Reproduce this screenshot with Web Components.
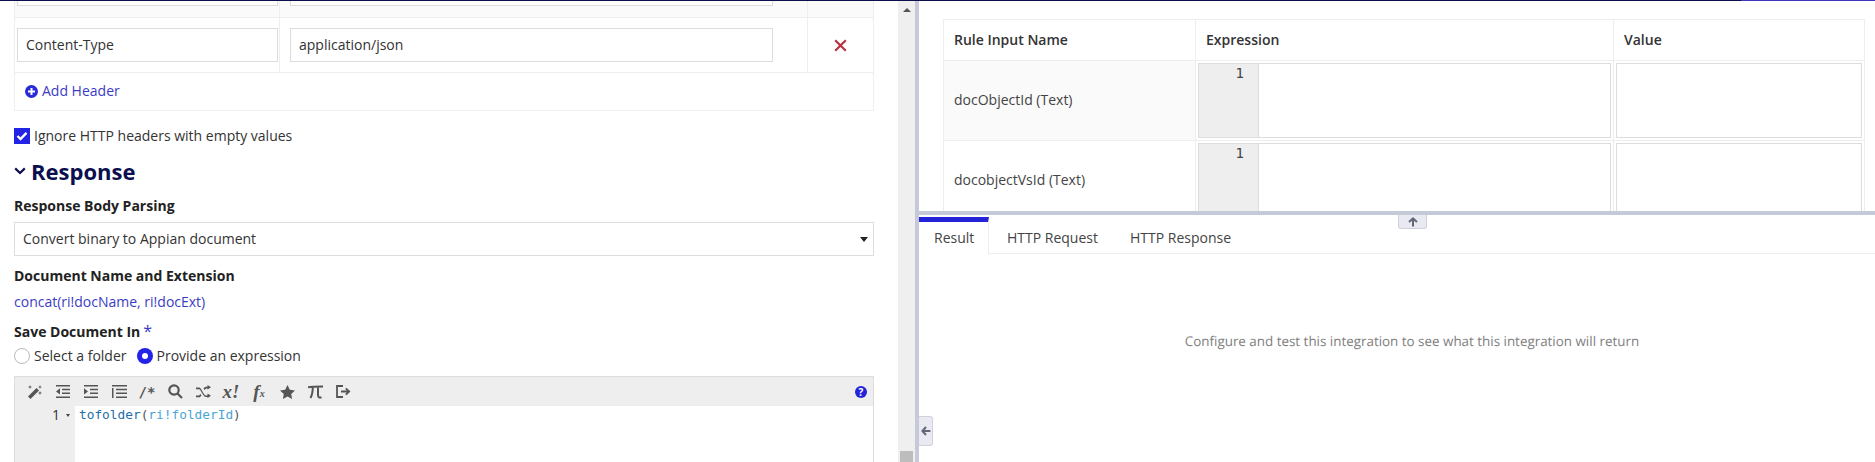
<!DOCTYPE html>
<html>
<head>
<meta charset="utf-8">
<title>Integration</title>
<style>
  html, body { margin: 0; height: 462px; overflow: hidden; background: #fff; }
  body { font: 14px/20px "Open Sans", sans-serif; color: #222; }
</style>
</head>
<body>
<app-shell>
  <settings-pane slot="left">
    <header-table></header-table>
    <check-line>Ignore HTTP headers with empty values</check-line>
    <section-title>Response</section-title>
    <field-label style="margin-top:8px">Response Body Parsing</field-label>
    <select-box>Convert binary to Appian document</select-box>
    <field-label style="margin-top:10px">Document Name and Extension</field-label>
    <link-text>concat(ri!docName, ri!docExt)</link-text>
    <field-label required style="margin-top:9px">Save Document In</field-label>
    <radio-group></radio-group>
    <code-editor></code-editor>
  </settings-pane>
  <test-pane slot="right">
    <rule-table slot="inputs"></rule-table>
    <result-tabs slot="results"></result-tabs>
  </test-pane>
</app-shell>

<script>
// small helper, every element just stamps its markup in an open shadow root
class ShadowEl extends HTMLElement {
  constructor() {
    super();
    this.attachShadow({ mode: 'open' });
    this.shadowRoot.innerHTML = this.markup();
  }
  markup() { return '<slot></slot>'; }
}

class AppShell extends ShadowEl {
  markup() {
    return `
      <style>
        :host { display: block; height: 462px; }
        .topline { display: flex; height: 1px; background: #0b0f4a; }
        .topline i { margin-left: auto; width: 134px; background: #4136c0; }
        .cols { display: flex; height: 461px; }
        .bar { width: 17px; background: #efefef; flex: none; display: flex; flex-direction: column;
               justify-content: space-between; align-items: center; }
        .up { margin-top: 7px; border: 4px solid transparent; border-top: 0; border-bottom: 4px solid #555; }
        .thumb { width: 13px; height: 11px; background: #bdbdbd; }
        .split { width: 4px; background: #c5c9d8; flex: none; }
        .right { flex: 1; min-width: 0; position: relative; }
        .left { width: 898px; flex: none; overflow: hidden; }
        .toggle { position: absolute; left: 0; top: 415px; width: 14px; height: 30px; box-sizing: border-box;
                  background: #e9eaf1; border: 1px solid #cfd2de; border-left: 0; border-radius: 0 3px 3px 0;
                  display: flex; align-items: center; justify-content: center; }
      </style>
      <div class="topline"><i></i></div>
      <div class="cols">
        <div class="left"><slot name="left"></slot></div>
        <div class="bar"><span class="up"></span><span class="thumb"></span></div>
        <div class="split"></div>
        <div class="right">
          <slot name="right"></slot>
          <div class="toggle">
            <svg width="10" height="10" viewBox="0 0 10 10"><path d="M5 1 1.4 5 5 9M1.8 5H9.4" fill="none" stroke="#636778" stroke-width="2"/></svg>
          </div>
        </div>
      </div>`;
  }
}

class SettingsPane extends ShadowEl {
  markup() {
    return `
      <style>:host { display: block; padding: 0 24px 0 14px; }</style>
      <slot></slot>`;
  }
}

class HeaderTable extends ShadowEl {
  markup() {
    return `
      <style>
        :host { display: block; border: 1px solid #eee; border-top: 0; box-sizing: border-box; }
        .row { display: grid; grid-template-columns: 265px 528px 1fr; border-bottom: 1px solid #eee; }
        .row > div { border-right: 1px solid #eee; box-sizing: border-box; }
        .row > div:last-child { border-right: 0; }
        .clip { height: 16px; background: #fafafa; }
        .clip > div { padding: 0 1px 0 2px; }
        .clip b { display: block; height: 4px; border: 1px solid #ddd; border-top: 0; background: #fff; }
        .clip > div + div { padding: 0 34px 0 10px; }
        .full { height: 54px; }
        .full > div { padding: 10px 1px 0 2px; }
        .full > div + div { padding-left: 10px; padding-right: 34px; }
        .input { height: 34px; box-sizing: border-box; border: 1px solid #ddd; padding: 6px 8px; line-height: 20px; color: #333; }
        .x { display: flex; align-items: center; justify-content: center; padding: 0 !important; }
        .add { height: 37px; box-sizing: border-box; padding: 0 0 1px 10px; display: flex; align-items: center; gap: 4px; color: #3c3cc4; }
      </style>
      <div class="row clip"><div><b></b></div><div><b></b></div><div></div></div>
      <div class="row full">
        <div><div class="input">Content-Type</div></div>
        <div><div class="input">application/json</div></div>
        <div class="x"><svg width="13" height="13" viewBox="0 0 13 13"><path d="M1.200 1.200 11.800 11.800M11.800 1.200 1.200 11.800" stroke="#b8323f" stroke-width="2.200"/></svg></div>
      </div>
      <div class="add">
        <svg width="13" height="13" viewBox="0 0 13 13"><circle cx="6.500" cy="6.500" r="6.500" fill="#2a2ad8"/><path d="M6.500 3v7M3 6.500h7" stroke="#fff" stroke-width="2"/></svg>
        <span>Add Header</span>
      </div>`;
  }
}

class CheckLine extends ShadowEl {
  markup() {
    return `
      <style>
        :host { display: flex; align-items: center; gap: 4px; margin-top: 15px; height: 20px; color: #333; }
        .box { width: 16px; height: 16px; background: #2323e6; display: flex; align-items: center; justify-content: center; }
      </style>
      <span class="box"><svg width="12" height="10" viewBox="0 0 12 10"><path d="M1.500 5 4.500 8 10.500 1.800" fill="none" stroke="#fff" stroke-width="2.400"/></svg></span>
      <slot></slot>`;
  }
}

class SectionTitle extends ShadowEl {
  markup() {
    return `
      <style>
        :host { display: flex; align-items: center; gap: 5px; margin-top: 8px; height: 34px;
                font-size: 22px; line-height: 34px; font-weight: 700; color: #0c0f4e; }
      </style>
      <svg width="12" height="8" viewBox="0 0 12 8"><path d="M1.200 1.400 6 6 10.800 1.400" fill="none" stroke="#0c0f4e" stroke-width="2.200"/></svg>
      <slot></slot>`;
  }
}

class FieldLabel extends ShadowEl {
  markup() {
    return `
      <style>
        :host { display: block; font-weight: 700; line-height: 20px; color: #222; }
        :host([required]) .star { display: inline; }
        .star { display: none; color: #3c3cc4; font-weight: 400; font-size: 16px; margin-left: 3px; }
      </style>
      <slot></slot><span class="star">*</span>`;
  }
}

class SelectBox extends ShadowEl {
  markup() {
    return `
      <style>
        :host { display: flex; align-items: center; justify-content: space-between; height: 34px; box-sizing: border-box;
                border: 1px solid #ddd; margin-top: 6px; padding: 0 5px 0 8px; color: #333; }
        .caret { border: 4px solid transparent; border-top: 5px solid #222; border-bottom: 0; }
      </style>
      <slot></slot><span class="caret"></span>`;
  }
}

class LinkText extends ShadowEl {
  markup() {
    return `
      <style>:host { display: block; margin-top: 6px; color: #3c3cc4; line-height: 20px; }</style>
      <slot></slot>`;
  }
}

class RadioGroup extends ShadowEl {
  markup() {
    return `
      <style>
        :host { display: flex; align-items: center; height: 20px; margin-top: 4px; color: #333; }
        span { display: inline-flex; align-items: center; gap: 4px; margin-right: 10px; }
        i { width: 14px; height: 14px; border: 1px solid #bbb; border-radius: 50%; display: block; }
        i.on { width: 16px; height: 16px; border: 0; background: #2323e6; position: relative; }
        i.on::after { content: ""; position: absolute; left: 5px; top: 5px; width: 6px; height: 6px; border-radius: 50%; background: #fff; }
      </style>
      <span><i></i>Select a folder</span>
      <span><i class="on"></i>Provide an expression</span>`;
  }
}

class CodeEditor extends ShadowEl {
  markup() {
    const g = '#555';
    return `
      <style>
        :host { display: block; margin-top: 10px; border: 1px solid #ddd; height: 90px; box-sizing: border-box; }
        .tools { height: 29px; background: #eee; display: flex; align-items: center; padding: 0 6px 0 6px; }
        .tools span { width: 28px; height: 20px; flex: none; display: flex; align-items: center; justify-content: center;
                      font: italic 700 16px/20px "Liberation Serif", serif; color: ${g}; }
        .tools span.t { font: 700 14px/20px "DejaVu Sans Mono", monospace; }
        .help { margin-left: auto; width: 12px !important; height: 12px !important; border-radius: 50%; background: #2323d8;
                color: #fff !important; font: 700 10px/12px "Open Sans", sans-serif !important; }
        .body { display: flex; height: 60px; }
        .gutter { width: 60px; flex: none; background: #eee; box-sizing: border-box; padding: 0 5px 0 0;
                  display: flex; justify-content: flex-end; gap: 6px; font: 14px/18px "Open Sans", sans-serif; color: #333; }
        .gutter em { width: 0; height: 0; margin-top: 8px; border: 2.500px solid transparent; border-top: 3px solid #444; border-bottom: 0; }
        pre { margin: 0; padding: 0 0 0 4px; font: 12.800px/18px "DejaVu Sans Mono", monospace; color: #555; }
        .fn { color: #1f6ea8; } .var { color: #4aa5d8; }
      </style>
      <div class="tools">
        <span><svg width="16" height="16" viewBox="0 0 16 16" fill="${g}"><path d="M1 12.500 9.500 4l2.500 2.500L3.500 15z"/><path d="M3 1l.6 1.400L5 3l-1.400.6L3 5l-.6-1.400L1 3l1.400-.6zM13 7l.6 1.400L15 9l-1.400.6L13 11l-.6-1.400L11 9l1.400-.6zM13 1l.5 1.500L15 3l-1.500.5L13 5l-.5-1.500L11 3l1.500-.5z"/></svg></span>
        <span><svg width="14" height="13" viewBox="0 0 14 13" fill="${g}"><path d="M0 0h14v1.500H0zM6 3.700h8v1.500H6zM6 7.600h8v1.500H6zM0 11.500h14V13H0zM4 3.200v6.400L0 6.400z"/></svg></span>
        <span><svg width="14" height="13" viewBox="0 0 14 13" fill="${g}"><path d="M0 0h14v1.500H0zM6 3.700h8v1.500H6zM6 7.600h8v1.500H6zM0 11.500h14V13H0zM0 3.200v6.400l4-3.200z"/></svg></span>
        <span><svg width="15" height="13" viewBox="0 0 15 13" fill="${g}"><path d="M0 0h15v1.500H0zM4 3.700h11v1.500H4zM4 7.600h11v1.500H4zM4 11.500h11V13H4zM0 3h1.500v10H0z"/></svg></span>
        <span class="t">/*</span>
        <span><svg width="15" height="15" viewBox="0 0 15 15" fill="none" stroke="${g}" stroke-width="2.200"><circle cx="6" cy="6" r="4.700"/><path d="M9.500 9.500 14 14"/></svg></span>
        <span><svg width="15" height="13" viewBox="0 0 15 13" fill="${g}"><path d="M0 2.500h3c2.500 0 4.500 8 7 8h1.500v-2L15 10.800 11.500 13v-1h-1.500C7 12 5 4.200 3 4.200H0zM0 10.500h3l1.500-1.600 1 1.500C4.700 11.400 3.900 12.200 3 12.200H0zM11.500 0 15 2.300 11.500 4.600V3.400H10L8.500 5l-1-1.500C8.200 2.500 9 1.700 10 1.700h1.500z"/></svg></span>
        <span style="font-size:19px">x!</span>
        <span style="font-size:19px">f<small style="font-size:10px;margin-top:4px">x</small></span>
        <span><svg width="15" height="14" viewBox="0 0 15 14" fill="${g}"><path d="M7.500 0 9.800 4.700l5.200.7-3.800 3.600.9 5-4.600-2.400L2.900 14l.9-5L0 5.400l5.200-.7z"/></svg></span>
        <span><svg width="15" height="14" viewBox="0 0 15 14" fill="none" stroke="${g}" stroke-width="2"><path d="M0 2.200C3 1.500 12 1.500 15 1.500M4.800 1.800C4.800 6 4.200 10 2.500 13M10 1.800V10c0 2.500 1.500 3 3.500 2.300"/></svg></span>
        <span><svg width="15" height="13" viewBox="0 0 15 13" fill="none" stroke="${g}" stroke-width="1.800"><path d="M7 1H1v11h6M5 6.500h7.500M9.800 3.300l3.400 3.200-3.400 3.200"/></svg></span>
        <span class="help">?</span>
      </div>
      <div class="body">
        <div class="gutter">1<em></em></div>
        <pre><span class="fn">tofolder</span>(<span class="var">ri!folderId</span>)</pre>
      </div>`;
  }
}

class TestPane extends ShadowEl {
  markup() {
    return `
      <style>
        :host { display: flex; flex-direction: column; height: 461px; position: relative; }
        .top { height: 210px; overflow: hidden; padding: 18px 10px 0 24px; box-sizing: border-box; flex: none; }
        .hsplit { height: 4px; background: #c5c9d8; flex: none; }
        .handle { position: absolute; left: 479px; top: 214px; width: 29px; height: 14px; box-sizing: border-box;
                  background: #e9eaf1; border: 1px solid #cfd2de; border-top: 0; border-radius: 0 0 3px 3px;
                  display: flex; align-items: center; justify-content: center; }
        .bottom { flex: 1; min-height: 0; }
      </style>
      <div class="top"><slot name="inputs"></slot></div>
      <div class="hsplit"></div>
      <div class="bottom"><slot name="results"></slot></div>
      <div class="handle"><svg width="10" height="10" viewBox="0 0 10 10"><path d="M1 5 5 1.400 9 5M5 1.800V9.400" fill="none" stroke="#636778" stroke-width="2"/></svg></div>`;
  }
}

class RuleTable extends ShadowEl {
  markup() {
    const editor = `<div class="ed"><div class="num">1</div><div></div></div>`;
    return `
      <style>
        :host { display: block; border: 1px solid #eee; border-bottom: 0; }
        .row { display: grid; grid-template-columns: 252px 418px 1fr; border-bottom: 1px solid #eee; }
        .row > div { border-right: 1px solid #eee; box-sizing: border-box; }
        .row > div:last-child { border-right: 0; }
        .head { height: 40px; font-weight: 600; color: #333; }
        .head > div { padding: 0 10px; display: flex; align-items: center; }
        .item { height: 79px; }
        .name { padding: 0 0 2px 10px; display: flex; align-items: center; color: #444; }
        .shade .name { background: #fafafa; }
        .cell { padding: 2px; }
        .ed { height: 75px; box-sizing: border-box; border: 1px solid #ddd; display: flex; }
        .num { width: 60px; background: #eee; border-right: 1px solid #ddd; box-sizing: border-box; text-align: right;
               padding: 0 14px 0 0; font: 14px/18px "DejaVu Sans Mono", monospace; color: #444; }
        .box { height: 75px; box-sizing: border-box; border: 1px solid #ddd; }
      </style>
      <div class="row head"><div>Rule Input Name</div><div>Expression</div><div>Value</div></div>
      <div class="row item shade"><div class="name">docObjectId (Text)</div><div class="cell">${editor}</div><div class="cell"><div class="box"></div></div></div>
      <div class="row item"><div class="name">docobjectVsId (Text)</div><div class="cell">${editor}</div><div class="cell"><div class="box"></div></div></div>`;
  }
}

class ResultTabs extends ShadowEl {
  markup() {
    return `
      <style>
        :host { display: block; height: 100%; }
        .tabs { display: flex; height: 39px; box-sizing: border-box; border-bottom: 1px solid #eee; color: #444; }
        .tab { padding: 13px 14px 0 18px; height: 38px; box-sizing: border-box; }
        .tab.on { width: 70px; margin-top: 2px; height: 37px; padding: 6px 0 0 15px; border-top: 5px solid #2323d8;
                  border-right: 1px solid #eee; background: #fff; }
        .msg { text-align: center; color: #808080; padding: 77px 0 0 30px; font-size: 13.400px; text-rendering: geometricPrecision; }
      </style>
      <div class="tabs">
        <div class="tab on">Result</div>
        <div class="tab">HTTP Request</div>
        <div class="tab">HTTP Response</div>
      </div>
      <div class="msg">Configure and test this integration to see what this integration will return</div>`;
  }
}

customElements.define('app-shell', AppShell);
customElements.define('settings-pane', SettingsPane);
customElements.define('header-table', HeaderTable);
customElements.define('check-line', CheckLine);
customElements.define('section-title', SectionTitle);
customElements.define('field-label', FieldLabel);
customElements.define('select-box', SelectBox);
customElements.define('link-text', LinkText);
customElements.define('radio-group', RadioGroup);
customElements.define('code-editor', CodeEditor);
customElements.define('test-pane', TestPane);
customElements.define('rule-table', RuleTable);
customElements.define('result-tabs', ResultTabs);
</script>
</body>
</html>
